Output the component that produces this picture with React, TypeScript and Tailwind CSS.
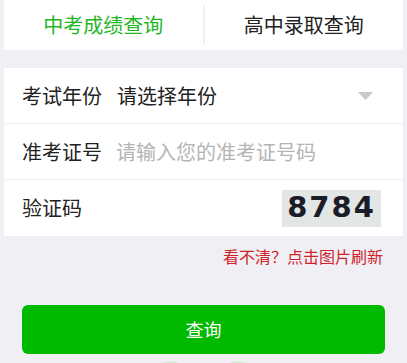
import { useState } from 'react';

const FONT = '"Noto Sans CJK SC", "Noto Sans", sans-serif';

export default function App() {
  const [tab, setTab] = useState(0);
  const [ticket, setTicket] = useState('');

  return (
    <div className="min-h-screen bg-[#efeff4] px-[4px]" style={{ fontFamily: FONT }}>
      {/* Tabs */}
      <div className="flex h-[50px] items-center bg-white">
        <button
          onClick={() => setTab(0)}
          className={`flex-1 text-[20px] leading-none ${tab === 0 ? 'text-[#1fb61f]' : 'text-[#222]'}`}
        >
          中考成绩查询
        </button>
        <div className="h-[40px] w-[2px] bg-[#f0f0f2]" />
        <button
          onClick={() => setTab(1)}
          className={`flex-1 text-[20px] leading-none ${tab === 1 ? 'text-[#1fb61f]' : 'text-[#222]'}`}
        >
          高中录取查询
        </button>
      </div>

      {/* Form */}
      <div className="mt-[18px] bg-white">
        <div className="flex h-[56px] items-center border-b border-[#f0f0f3] pl-[18px] pr-[30px]">
          <span className="w-[95px] text-[20px] text-[#222]">考试年份</span>
          <span className="flex-1 text-[20px] text-[#222]">请选择年份</span>
          <svg width="15" height="8" viewBox="0 0 15 8">
            <path d="M0 0 L15 0 L7.5 8 Z" fill="#c7c7cc" />
          </svg>
        </div>
        <div className="flex h-[56px] items-center border-b border-[#f0f0f3] pl-[18px] pr-[20px]">
          <span className="w-[94px] shrink-0 text-[20px] text-[#222]">准考证号</span>
          <input
            value={ticket}
            onChange={(e) => setTicket(e.target.value)}
            placeholder="请输入您的准考证号码"
            className="min-w-0 flex-1 bg-transparent text-[20px] text-[#222] placeholder-[#b4b4b4] outline-none"
          />
        </div>
        <div className="flex h-[56px] items-center justify-between pl-[18px] pr-[22px]">
          <span className="text-[20px] text-[#222]">验证码</span>
          <div
            className="flex h-[37px] w-[99px] items-center justify-center bg-[#e2e6e4] text-[29px] font-bold tracking-[2px] text-[#1c1c28]"
            style={{ fontFamily: '"DejaVu Sans", sans-serif' }}
          >
            8784
          </div>
        </div>
      </div>

      <div className="mt-[9px] pr-[20px] text-right text-[16px] leading-[22px] text-[#cf2229]">
        看不清？点击图片刷新
      </div>

      <div className="px-[18px] pt-[38px]">
        <button className="flex h-[49px] w-full items-center justify-center rounded-[6px] bg-[#00ba00] text-[18px] text-white">
          查询
        </button>
      </div>

      <div className="mt-[7px] flex justify-center gap-[24px]">
        <div className="h-[44px] w-[44px] rounded-full bg-[#d6ebd6]" />
        <div className="h-[44px] w-[44px] rounded-full bg-[#d6ebd6]" />
      </div>
    </div>
  );
}
